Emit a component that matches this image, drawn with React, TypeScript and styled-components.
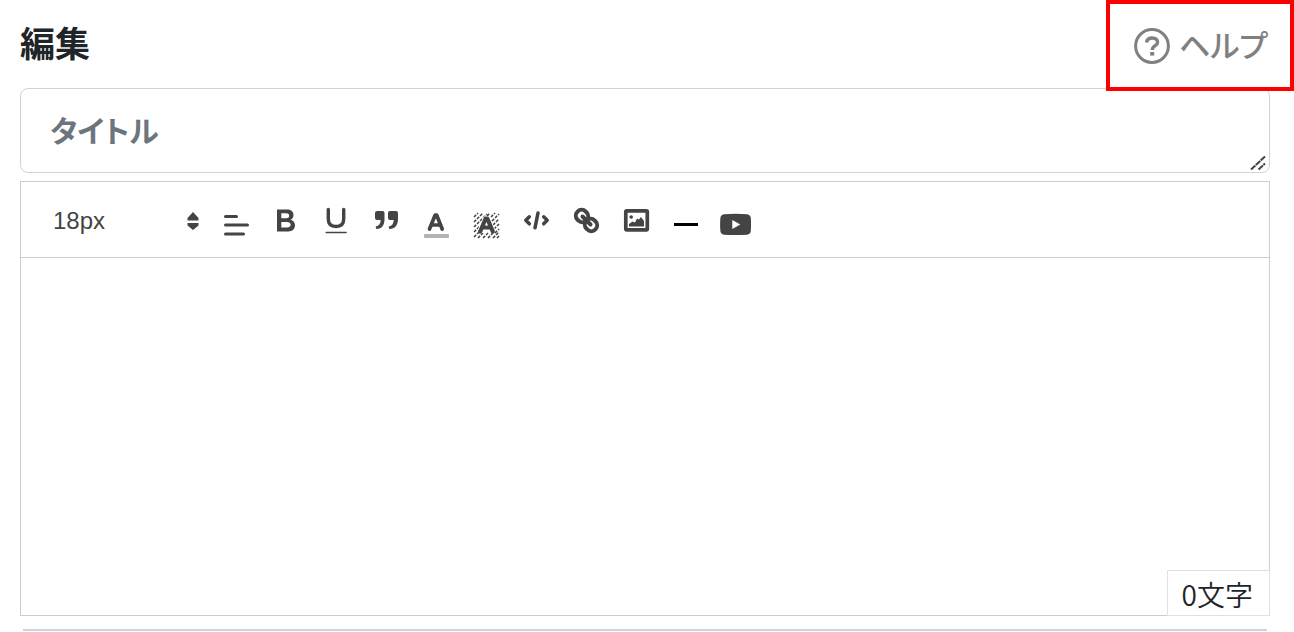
import React from "react";
import styled, { createGlobalStyle } from "styled-components";

const Global = createGlobalStyle`
  *, *::before, *::after { box-sizing: border-box; }
  body {
    margin: 0;
    background: #fff;
    color: #212529;
    font-family: "Noto Sans CJK JP", sans-serif;
  }
`;

const Page = styled.main`
  display: flex;
  flex-direction: column;
  min-height: 100vh;
  padding: 0 24px 0 20px;
`;

const Header = styled.header`
  display: flex;
  align-items: center;
  justify-content: space-between;
  height: 88px;
  padding-bottom: 4px;
`;

const Heading = styled.h1`
  margin: 0;
  font-size: 35px;
  line-height: 48px;
  font-weight: 700;
`;

const HelpLink = styled.a`
  position: absolute;
  top: 0;
  right: 0;
  z-index: 1;
  display: flex;
  align-items: center;
  gap: 9px;
  height: 91px;
  padding: 0 22px 0 24px;
  border: 4px solid #f00;
  color: #808080;
  font-size: 31px;
  line-height: 48px;
  font-weight: 500;
  font-feature-settings: "palt";
  text-decoration: none;
`;

const HelpText = styled.span`
  padding-bottom: 4px;
`;

const TitleField = styled.div`
  position: relative;
  display: flex;
`;

const TitleInput = styled.textarea`
  flex: 1;
  height: 85px;
  padding: 16px 29px;
  border: 1px solid #ced4da;
  border-radius: 8px;
  background: #fff;
  color: #212529;
  font: 700 30px/48px "Noto Sans CJK JP", sans-serif;
  font-feature-settings: "palt";
  resize: none;
  overflow: hidden;
  outline: none;
  &::placeholder { color: #6c757d; opacity: 1; }
`;

const Grip = styled.svg`
  position: absolute;
  right: 4px;
  bottom: 2px;
  pointer-events: none;
`;

const Editor = styled.section`
  position: relative;
  flex: 1;
  display: flex;
  flex-direction: column;
  margin: 8px 0 13px;
  border: 1px solid #ccc;
`;

const Toolbar = styled.div`
  display: flex;
  align-items: center;
  height: 76px;
  padding: 5px 30px 0;
  border-bottom: 1px solid #ccc;
`;

const SizePicker = styled.label`
  position: relative;
  display: flex;
  align-items: center;
  width: 160px;
  color: #444;
`;

const SizeSelect = styled.select`
  width: 100%;
  height: 48px;
  padding: 0 32px 2px 2px;
  border: 0;
  background: transparent;
  color: #444;
  font: 24px/46px "Liberation Sans", Arial, sans-serif;
  appearance: none;
`;

const PickerArrows = styled.svg`
  position: absolute;
  right: 12px;
  pointer-events: none;
`;

const ToolButton = styled.button`
  display: flex;
  align-items: center;
  justify-content: center;
  width: 50px;
  height: 48px;
  padding: 0;
  border: 0;
  background: transparent;
  color: #444;
  cursor: pointer;
`;

const Body = styled.textarea`
  flex: 1;
  min-height: 200px;
  padding: 24px 30px;
  border: 0;
  outline: none;
  resize: none;
  background: transparent;
  color: #212529;
  font: 28px/40px "Noto Sans CJK JP", sans-serif;
`;

const Counter = styled.output`
  position: absolute;
  right: -1px;
  bottom: -1px;
  height: 46px;
  padding: 0 16px 0 14px;
  border: 1px solid #dee2e6;
  background: #fff;
  font-size: 28px;
  line-height: 46px;
  font-weight: 350;
`;

const NextPanelEdge = styled.div`
  height: 3px;
  margin: 0 3px;
  border-top: 2px solid #ced4da;
`;

const tools: { label: string; art: React.ReactNode }[] = [
  {
    label: "Align",
    art: (
      <g stroke="currentColor" strokeWidth="3" strokeLinecap="round">
        <path d="M5.5 11.5H16.5M5.5 20H27.5M5.5 29H23.5" />
      </g>
    ),
  },
  {
    label: "Bold",
    art: (
      <path
        fill="currentColor"
        fillRule="evenodd"
        d="M7 4.5H17.5C21.5 4.5 23.5 7 23.5 10C23.5 12.3 22.4 14 20.6 14.8C23.3 15.6 25 17.5 25 20.3C25 24.2 22.2 26.5 18.3 26.5H7ZM11.3 8.3V13.3H16.2C18 13.3 19.2 12.5 19.2 10.8S18 8.3 16.2 8.3ZM11.3 17V22.6H17C19.2 22.6 20.6 21.6 20.6 19.8S19.2 17 17 17Z"
      />
    ),
  },
  {
    label: "Underline",
    art: (
      <g fill="none" stroke="currentColor" strokeLinecap="round">
        <path strokeWidth="3.4" d="M8.3 4.5V14C8.3 19 11 21.5 16 21.5S23.7 19 23.7 14V4.5" />
        <path strokeWidth="1.6" d="M6.3 27.5H26" />
      </g>
    ),
  },
  {
    label: "Quote",
    art: (
      <g fill="currentColor">
        <path d="M7 6H12.5Q14.500 6 14.500 8V14C14.500 20 12 24 6.500 24Q5.500 23.400 5.800 21.500C9 21 10.500 18.500 10.700 15H7Q5 15 5 13V8Q5 6 7 6Z" />
        <path d="M20 6H26Q28 6 28 8V14C28 20 25 24 19.500 24Q18.500 23.400 18.800 21.500C22 21 23.500 18.500 23.700 15H20Q18 15 18 13V8Q18 6 20 6Z" />
      </g>
    ),
  },
  {
    label: "Text color",
    art: (
      <>
        <path fill="none" stroke="currentColor" strokeWidth="3.7" strokeLinecap="round" strokeLinejoin="round" d="M9.5 24L15.2 10H16.6L22.2 24M11.5 20H20.3" />
        <rect x="4" y="29" width="25" height="4" rx="1" fill="#b4b4b4" />
      </>
    ),
  },
  {
    label: "Background color",
    art: (
      <>
        <path
          stroke="currentColor"
          strokeWidth="1.5"
          strokeDasharray="3 1.3"
          d="M4 12L8 8M4 17L13 8M4 22L17 9M4 27L10 21M4 32L11 25M17 11L20 8M21 12L25 8M22 16L29 9M23 20L29 14M24 24L29 19M25 28L29 24M8 33L13 28M13 33L18 28M18 33L23 28M23 33L29 27M27 33L29 31"
        />
        <path fill="none" stroke="#fff" strokeWidth="6" strokeLinejoin="round" d="M10.2 26.5L15.7 14H17.2L22.8 26.5" />
        <path fill="none" stroke="currentColor" strokeWidth="4.2" strokeLinecap="round" strokeLinejoin="round" d="M10.2 26.5L15.7 13.5H17.3L22.8 26.5M12 22.5H21" />
      </>
    ),
  },
  {
    label: "Code",
    art: (
      <g fill="none" stroke="currentColor" strokeWidth="3.5" strokeLinecap="round" strokeLinejoin="round">
        <path d="M9.3 11.8L5.8 15.3L9.3 18.8M23.7 11.8L27.2 15.3L23.7 18.8M18 8L15 22.8" />
      </g>
    ),
  },
  {
    label: "Link",
    art: (
      <g fill="none" stroke="currentColor" strokeWidth="4">
        <rect x="5.7" y="5.2" width="12.6" height="11.6" rx="5.8" transform="rotate(45 12 11)" />
        <rect x="14.7" y="14.2" width="12.6" height="11.6" rx="5.8" transform="rotate(45 21 20)" />
        <path strokeLinecap="round" d="M12.5 11.5L20.5 19.5" />
      </g>
    ),
  },
  {
    label: "Image",
    art: (
      <>
        <rect x="5.8" y="5.8" width="21.5" height="19" rx="1" fill="none" stroke="currentColor" strokeWidth="3.7" />
        <circle cx="11.2" cy="12" r="1.8" fill="currentColor" />
        <path fill="currentColor" d="M9 21.5V19L12.5 16.5L15 17.5L17 13.5L19 14.5L21 12L24 16V21.5Z" />
      </>
    ),
  },
  { label: "Divider", art: <rect x="4" y="18" width="24" height="3" fill="#000" /> },
  {
    label: "YouTube",
    art: (
      <path
        fill="currentColor"
        fillRule="evenodd"
        d="M4 9.3Q15.5 8.3 27 9.3Q30.5 9.7 30.8 13Q31.3 19.5 30.8 26Q30.5 29.3 27 29.7Q15.5 30.5 4 29.7Q.7 29.3 .4 26Q-.2 19.5 .4 13Q.7 9.7 4 9.3ZM12.3 15V24L20.3 19.5Z"
      />
    ),
  },
];

export default function App() {
  const [text, setText] = React.useState("");
  return (
    <>
      <Global />
      <Page>
        <Header>
          <Heading>編集</Heading>
          <HelpLink href="#help">
            <svg width="36" height="36" viewBox="0 0 36 36" fill="none" stroke="currentColor" aria-hidden="true">
              <circle cx="18" cy="18" r="16.4" strokeWidth="3" />
              <path strokeWidth="3.4" d="M12.5 14.5C13 11.5 15 10 18.2 10C21.5 10 23.6 11.7 23.6 14.2C23.6 18 18.3 17.5 18.3 22" />
              <rect x="16.2" y="24" width="4" height="3.6" fill="currentColor" stroke="none" />
            </svg>
            <HelpText>ヘルプ</HelpText>
          </HelpLink>
        </Header>
        <TitleField>
          <TitleInput placeholder="タイトル" aria-label="タイトル" rows={1} />
          <Grip width="16" height="16" viewBox="0 0 16 16" stroke="#444" strokeWidth="2" aria-hidden="true">
            <path d="M1 14.5L15 1.5M8.5 14.5L15 8.5" strokeDasharray="6 .6" />
          </Grip>
        </TitleField>
        <Editor>
          <Toolbar>
            <SizePicker>
              <SizeSelect aria-label="Font size" defaultValue="18px">
                <option>16px</option>
                <option>18px</option>
                <option>24px</option>
              </SizeSelect>
              <PickerArrows width="12" height="20" viewBox="0 0 12 20" fill="currentColor" aria-hidden="true">
                <path d="M6 0L11.5 6V8.5H.5V6ZM6 18L11.5 13.5V11H.5V13.5Z" />
              </PickerArrows>
            </SizePicker>
            {tools.map((tool) => (
              <ToolButton key={tool.label} type="button" aria-label={tool.label}>
                <svg width="32" height="34" viewBox="0 0 32 34" aria-hidden="true">
                  {tool.art}
                </svg>
              </ToolButton>
            ))}
          </Toolbar>
          <Body aria-label="本文" value={text} onChange={(e) => setText(e.target.value)} />
          <Counter>{text.length}文字</Counter>
        </Editor>
        <NextPanelEdge />
      </Page>
    </>
  );
}
